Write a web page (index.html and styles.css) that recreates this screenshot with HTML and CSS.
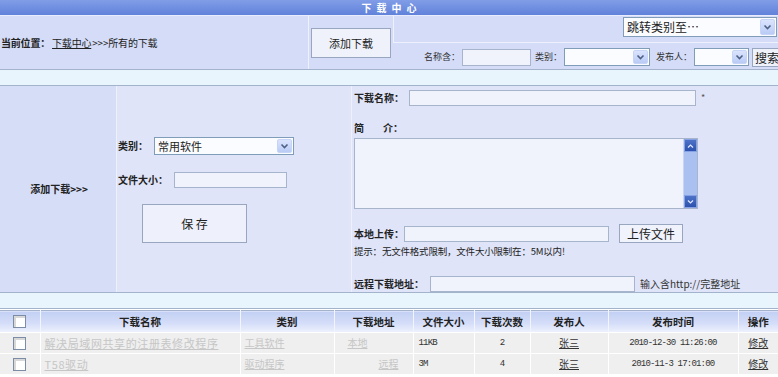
FILE: index.html
```html
<!DOCTYPE html>
<html lang="zh-CN">
<head>
  <meta charset="UTF-8">
  <title>下载中心</title>
  <link rel="stylesheet" href="styles.css">
</head>
<body>
  <div class="top">下载中心</div>

  <div class="bar">
    <div class="crumb"><b>当前位置：</b>&nbsp;<a href="#">下载中心</a>&gt;&gt;&gt;所有的下载</div>
    <div class="addcell"><button class="btn btn-add">添加下载</button></div>
    <div class="tools">
      <div class="jump">
        <span class="sel sel-jump">跳转类别至…<i class="arr"><svg width="9" height="6" viewBox="0 0 9 6"><polyline points="1.5,1.5 4.5,4.5 7.5,1.5" fill="none" stroke="#4d6185" stroke-width="1.6"/></svg></i></span>
      </div>
      <div class="search">
        <span class="lbl-s">名称含：</span><input class="inp inp-name" type="text">
        <span class="lbl-s gap4">类别：</span><span class="sel sel-cat"><i class="arr"><svg width="9" height="6" viewBox="0 0 9 6"><polyline points="1.5,1.5 4.5,4.5 7.5,1.5" fill="none" stroke="#4d6185" stroke-width="1.6"/></svg></i></span>
        <span class="lbl-s gap4">发布人：</span><span class="sel sel-pub"><i class="arr"><svg width="9" height="6" viewBox="0 0 9 6"><polyline points="1.5,1.5 4.5,4.5 7.5,1.5" fill="none" stroke="#4d6185" stroke-width="1.6"/></svg></i></span>
        <button class="btn btn-search">搜索</button>
      </div>
    </div>
  </div>

  <div class="strip"></div>

  <div class="form">
    <div class="fleft">添加下载&gt;&gt;&gt;</div>
    <div class="fmid">
      <div class="row">
        <b>类别：</b>
        <span class="sel sel-type">常用软件<i class="arr"><svg width="9" height="6" viewBox="0 0 9 6"><polyline points="1.5,1.5 4.5,4.5 7.5,1.5" fill="none" stroke="#4d6185" stroke-width="1.6"/></svg></i></span>
      </div>
      <div class="row row-size">
        <b>文件大小：</b>
        <input class="inp inp-size" type="text">
      </div>
      <button class="btn btn-save">保 存</button>
    </div>
    <div class="fright">
      <div class="row">
        <b>下载名称：</b>
        <input class="inp inp-title" type="text">
        <span class="star">*</span>
      </div>
      <div class="row row-intro"><b>简<span class="sp"></span>介：</b></div>
      <div class="ta-box">
        <textarea class="ta"></textarea>
        <div class="vsb">
          <span class="sb-btn"><svg width="7" height="4" viewBox="0 0 7 4"><polyline points="1,3.5 3.5,1 6,3.5" fill="none" stroke="#dfe8ff" stroke-width="1.2"/></svg></span>
          <span class="sb-track"></span>
          <span class="sb-btn"><svg width="7" height="4" viewBox="0 0 7 4"><polyline points="1,0.5 3.5,3 6,0.5" fill="none" stroke="#dfe8ff" stroke-width="1.2"/></svg></span>
        </div>
      </div>
      <div class="row row-upload">
        <b>本地上传：</b>
        <input class="inp inp-file" type="text">
        <button class="btn btn-upload">上传文件</button>
      </div>
      <div class="hint">提示：无文件格式限制，文件大小限制在：5M以内!</div>
      <div class="row row-remote">
        <b>远程下载地址：</b>
        <input class="inp inp-url" type="text">
        <span class="note">输入含http://完整地址</span>
      </div>
    </div>
  </div>

  <div class="strip strip2"></div>

  <table class="list">
    <colgroup>
      <col style="width:40px"><col style="width:200px"><col style="width:94px"><col style="width:79px">
      <col style="width:61px"><col style="width:56px"><col style="width:78px"><col style="width:130px"><col style="width:40px">
    </colgroup>
    <thead>
      <tr>
        <th><span class="cb"></span></th>
        <th>下载名称</th>
        <th>类别</th>
        <th>下载地址</th>
        <th>文件大小</th>
        <th>下载次数</th>
        <th>发布人</th>
        <th>发布时间</th>
        <th>操作</th>
      </tr>
    </thead>
    <tbody>
      <tr>
        <td class="c"><span class="cb"></span></td>
        <td class="name"><a href="#">解决局域网共享的注册表修改程序</a></td>
        <td class="cat"><a href="#">工具软件</a></td>
        <td class="addr"><a href="#">本地</a></td>
        <td class="num size">11KB</td>
        <td class="c num">2</td>
        <td class="c"><a class="dark" href="#">张三</a></td>
        <td class="c num">2010-12-30 11:26:00</td>
        <td class="c"><a class="dark" href="#">修改</a></td>
      </tr>
      <tr>
        <td class="c"><span class="cb"></span></td>
        <td class="name"><a href="#">T58驱动</a></td>
        <td class="cat"><a href="#">驱动程序</a></td>
        <td class="addr far"><a href="#">远程</a></td>
        <td class="num size">3M</td>
        <td class="c num">4</td>
        <td class="c"><a class="dark" href="#">张三</a></td>
        <td class="c num">2010-11-3 17:01:00</td>
        <td class="c"><a class="dark" href="#">修改</a></td>
      </tr>
    </tbody>
  </table>
</body>
</html>
```

FILE: styles.css
```css
* { box-sizing: border-box; }

body {
  margin: 0;
  width: 778px;
  overflow: hidden;
  font: 10px/12px "Noto Sans CJK SC", "Liberation Sans", sans-serif;
  color: #222;
  background: #fff;
}

a { color: #222; }

.top {
  height: 15px;
  background: linear-gradient(#819de7, #6182da);
  color: #fff;
  font-weight: bold;
  text-align: center;
  line-height: 15px;
  letter-spacing: 5px;
  padding-left: 5px;
}

/* first bar: breadcrumb / add button / search */
.bar {
  display: flex;
  height: 55px;
  background: #d4dcf7;
  border-top: 1px solid #e8ecfb;
  border-bottom: 1px solid #a3b3cc;
}
.crumb {
  width: 309px;
  display: flex;
  align-items: center;
  padding-left: 1px;
  border-right: 1px solid #eef1fb;
  letter-spacing: -0.2px;
}
.crumb a { margin-right: 1px; }

.addcell {
  width: 84px;
  display: flex;
  align-items: center;
  padding-left: 2px;
}

.tools {
  flex: 1;
  display: flex;
  flex-direction: column;
  overflow: hidden;
}
.jump {
  height: 26px;
  display: flex;
  justify-content: flex-end;
  padding-top: 1px;
  padding-right: 1px;
  border-left: 1px solid #eef1fb;
}
.search {
  flex: 1;
  display: flex;
  align-items: center;
  padding-left: 31px;
  padding-top: 2px;
  border-top: 1px solid #eef1fb;
  white-space: nowrap;
}
.lbl-s { font-size: 9px; color: #333; margin-right: 2px; }
.gap4 { margin-left: 4px; }

.btn {
  font-family: "Noto Sans CJK SC", sans-serif;
  color: #222;
  background: #eff2fb;
  border: 1px solid #98a6c0;
  padding: 0;
  border-radius: 0;
}
.btn-add { width: 80px; height: 30px; font-size: 11px; }
.btn-search {
  width: 29px;
  height: 19px;
  font-size: 12px;
  margin-left: 3px;
  line-height: 17px;
  flex-shrink: 0;
  border-right: none;
}
.btn-save { width: 105px; height: 39px; font-size: 12px; margin: 16px 0 0 24px; background: #eef1fb; }
.btn-upload { width: 64px; height: 19px; font-size: 12px; margin-left: 10px; background: #f0f3fb; }

.inp {
  border: 1px solid #a7b5cc;
  background: #f0f3fc;
  padding: 0;
  margin: 0;
  flex-shrink: 0;
}
.inp-name { width: 69px; height: 17px; }
.inp-size { width: 113px; height: 16px; margin-left: 6px; }
.inp-title { width: 287px; height: 16px; margin-left: 5px; }
.inp-file { width: 205px; height: 16px; }
.inp-url { width: 205px; height: 16px; margin-left: 6px; }

.sel {
  display: inline-flex;
  align-items: center;
  border: 1px solid #7f9db9;
  background: #fbfcff;
  padding-left: 3px;
  flex-shrink: 0;
}
.arr {
  margin-left: auto;
  width: 15px;
  height: calc(100% - 2px);
  margin-right: 1px;
  background: linear-gradient(#dbe4fd, #b9cbf6);
  border: 1px solid #c6d4f8;
  border-radius: 2px;
  display: flex;
  align-items: center;
  justify-content: center;
}
.sel-jump { width: 154px; height: 20px; font-size: 12px; }
.sel-cat { width: 86px; height: 18px; margin-right: 2px; }
.sel-pub { width: 55px; height: 18px; }
.sel-type { width: 140px; height: 18px; font-size: 11px; margin-left: 6px; }

.strip {
  height: 16px;
  background: #e8f5fd;
  border-bottom: 1px solid #a3b3cc;
}
.strip2 { margin-bottom: 1px; }

/* add form */
.form {
  display: flex;
  height: 207px;
  background: #dfe4f8;
  border-bottom: 1px solid #a3b3cc;
}
.fleft {
  width: 117px;
  background: #d5ddf7;
  border-right: 1px solid #eef1fb;
  display: flex;
  align-items: center;
  justify-content: center;
  font-weight: bold;
  padding-left: 2px;
}
.fmid {
  width: 235px;
  border-right: 1px solid #eef1fb;
  padding: 51px 0 0 1px;
}
.fright {
  flex: 1;
  padding: 4px 0 0 2px;
}
.row { display: flex; align-items: center; white-space: nowrap; }
.row-size { margin-top: 17px; }
.star { margin-left: 5px; font-size: 9px; color: #555; }
.row-intro { margin-top: 16px; height: 12px; }
.sp { display: inline-block; width: 19px; }

.ta-box {
  display: flex;
  width: 344px;
  height: 71px;
  margin-top: 4px;
  border: 1px solid #a7b5cc;
  background: #f0f3fc;
}
.ta {
  flex: 1;
  border: none;
  background: transparent;
  resize: none;
  padding: 0;
}
.vsb {
  width: 14px;
  display: flex;
  flex-direction: column;
  background: #aac0f0;
  border-left: 1px solid #c8d5f5;
}
.sb-btn {
  height: 13px;
  background: linear-gradient(#4e72c8, #2c52ad);
  border: 1px solid #86a2e4;
  display: flex;
  align-items: center;
  justify-content: center;
}
.sb-track { flex: 1; }

.row-upload { margin-top: 15px; height: 19px; }
.hint { margin-top: 2px; height: 12px; font-size: 9.5px; letter-spacing: -0.2px; }
.row-remote { margin-top: 19px; }
.note { margin-left: 5px; color: #333; }

/* list */
.list {
  width: 778px;
  border-collapse: collapse;
  table-layout: fixed;
  border-top: 1px solid #a3b3cc;
}
.list th {
  height: 22px;
  padding: 0;
  font-size: 10.5px;
  font-weight: bold;
  text-align: center;
  background: linear-gradient(#c3d0f4, #d4ddf8 55%, #eef2fd);
  border-left: 1px solid #f2f5fe;
  border-bottom: 1px solid #fff;
}
.list th:first-child, .list td:first-child { border-left: none; }
.list td {
  height: 21px;
  padding: 0;
  background: #efefef;
  border-left: 1px solid #fff;
  border-bottom: 1px solid #fff;
  white-space: nowrap;
  overflow: hidden;
}
.c { text-align: center; }
.cb {
  display: inline-block;
  width: 13px;
  height: 13px;
  vertical-align: middle;
  border: 1px solid #7c8ba6;
  background: #fff;
  box-shadow: inset 2px 2px 0 #d8d8d8;
}
.name { padding-left: 4px !important; }
.name a { color: #c6c6c6; font-size: 11px; letter-spacing: 0.6px; }
.cat { padding-left: 4px !important; }
.cat a, .addr a { color: #c6c6c6; }
.addr { padding-left: 13px !important; }
.addr.far { padding-left: 44px !important; }
.num { font-family: "Liberation Mono", monospace; font-size: 9px; letter-spacing: -0.8px; color: #333; }
.size { padding-left: 5px !important; }
a.dark { color: #333; }
```
